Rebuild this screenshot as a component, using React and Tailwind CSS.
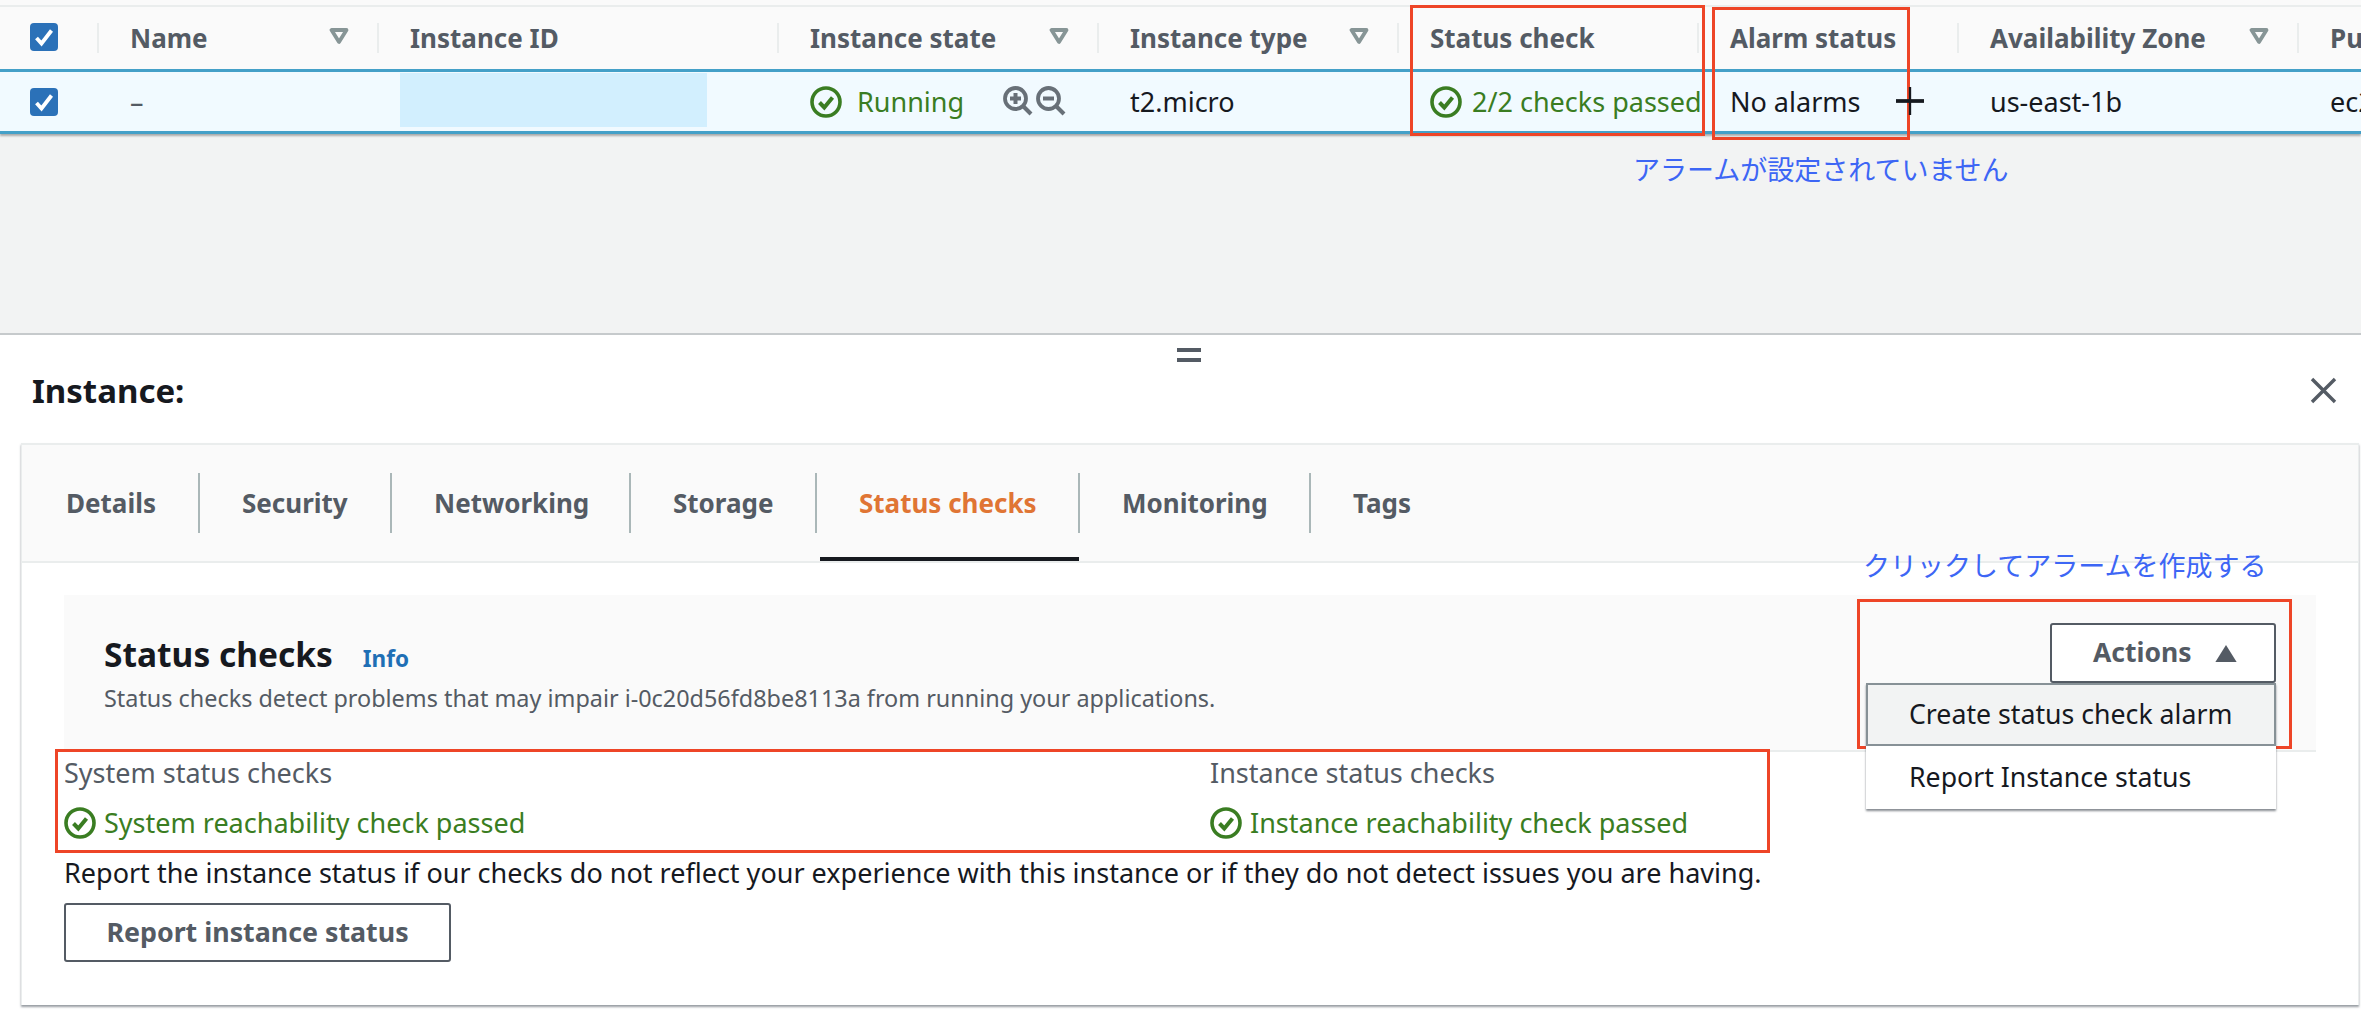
const Check = ({ className }) => (
  <svg viewBox="0 0 32 32" className={`${className} shrink-0`} fill="none">
    <circle cx="16" cy="16" r="14" stroke="#3a7d22" strokeWidth="3.6" />
    <path d="M9.5 16.5l4.8 5L22.5 11.5" stroke="#3a7d22" strokeWidth="4" />
  </svg>
);

const Box = () => (
  <div className="w-[28px] h-[28px] rounded-[4px] bg-[#2b71b8] flex items-center justify-center">
    <svg viewBox="0 0 28 28" className="w-[28px] h-[28px]" fill="none">
      <path d="M6.5 15l5 5.5L21.5 7.5" stroke="#fff" strokeWidth="3.8" />
    </svg>
  </div>
);

const Filter = () => (
  <svg viewBox="0 0 20 16" className="w-[20px] h-[16px]" fill="none">
    <path d="M2.5 2h15L10 14z" stroke="#879596" strokeWidth="3.8" strokeLinejoin="round" />
  </svg>
);

const Zoom = ({ plus }) => (
  <svg viewBox="0 0 30 30" className="w-[30px] h-[30px]" fill="none">
    <circle cx="12.5" cy="12.5" r="10.5" stroke="#687078" strokeWidth="3.8" />
    <path d="M20 20l8 8" stroke="#687078" strokeWidth="4" />
    <path d="M7 12.5h11" stroke="#687078" strokeWidth="4" />
    {plus && <path d="M12.5 7v11" stroke="#687078" strokeWidth="4" />}
  </svg>
);

const HeadCell = ({ w, label, filter }) => (
  <div className={`${w} h-full shrink-0 flex items-center pl-[33px] relative`}>
    <div className="absolute left-0 top-[16px] w-[2px] h-[30px] bg-[#eaeded]" />
    <span className="font-bold text-[26px] text-[#545b64] whitespace-nowrap">{label}</span>
    {filter && (
      <span className="absolute right-[28px] top-[21px]">
        <Filter />
      </span>
    )}
  </div>
);

const Red = ({ className }) => (
  <div className={`absolute border-[3px] border-[#ee4527] pointer-events-none ${className}`} />
);

const tabs = ["Details", "Security", "Networking", "Storage", "Status checks", "Monitoring", "Tags"];
const tabWidths = ["w-[178px]", "w-[192px]", "w-[239px]", "w-[186px]", "w-[263px]", "w-[231px]", "w-[150px]"];

export default function App() {
  return (
    <div className="relative w-[2361px] h-[1014px] overflow-hidden bg-white flex flex-col font-['Noto_Sans','Noto_Sans_CJK_JP',sans-serif] text-[27px] text-[#16191f]">
      <div className="h-[335px] shrink-0 bg-[#f2f3f3] border-b-2 border-[#c6cacc] flex flex-col">
        <div className="h-[5px] bg-[#fafafa] shrink-0" />
        <div className="h-[64px] shrink-0 flex bg-[#fafafa] border-t-2 border-[#eaeded]">
          <div className="w-[97px] h-full shrink-0 pl-[30px] pt-[16px]">
            <Box />
          </div>
          <HeadCell w="w-[280px]" label="Name" filter />
          <HeadCell w="w-[400px]" label="Instance ID" />
          <HeadCell w="w-[320px]" label="Instance state" filter />
          <HeadCell w="w-[300px]" label="Instance type" filter />
          <HeadCell w="w-[300px]" label="Status check" />
          <HeadCell w="w-[260px]" label="Alarm status" />
          <HeadCell w="w-[340px]" label="Availability Zone" filter />
          <HeadCell w="w-[64px]" label="Pu" />
        </div>
        <div className="h-[65px] shrink-0 flex items-center bg-[#f1faff] border-y-[3px] border-[#44a0c8] shadow-[0_2px_2px_rgba(0,0,0,0.3)] leading-[36px]">
          <div className="w-[97px] shrink-0 pl-[30px]">
            <Box />
          </div>
          <div className="w-[280px] shrink-0 pl-[33px] text-[#545b64]">–</div>
          <div className="w-[400px] shrink-0 pl-[23px]">
            <div className="w-[307px] h-[54px] -mt-[3px] bg-[#d2effe]" />
          </div>
          <div className="w-[320px] shrink-0 pl-[33px] flex items-center">
            <Check className="w-[32px] h-[32px]" />
            <span className="ml-[15px] text-[#3a7d22] w-[146px]">Running</span>
            <span className="-mt-[1px]">
              <Zoom plus />
            </span>
            <span className="ml-[3px] -mt-[1px]">
              <Zoom />
            </span>
          </div>
          <div className="w-[300px] shrink-0 pl-[33px]">t2.micro</div>
          <div className="w-[300px] shrink-0 pl-[33px] flex items-center">
            <Check className="w-[32px] h-[32px]" />
            <span className="ml-[10px] text-[#3a7d22] whitespace-nowrap">2/2 checks passed</span>
          </div>
          <div className="w-[260px] shrink-0 pl-[33px]">No alarms</div>
          <div className="w-[340px] shrink-0 pl-[33px]">us-east-1b</div>
          <div className="w-[64px] shrink-0 pl-[33px] overflow-hidden">ec2</div>
        </div>
      </div>

      <div className="flex-1 flex flex-col pb-[9px]">
        <div className="h-[108px] shrink-0 flex items-start justify-between pl-[32px] pr-[24px] pt-[37px]">
          <h2 className="font-bold text-[33px] leading-[38px]">Instance:</h2>
          <svg viewBox="0 0 27 27" className="w-[27px] h-[27px] mt-[5px]" fill="none">
            <path d="M2 2l23 23M25 2L2 25" stroke="#545b64" strokeWidth="3.4" />
          </svg>
        </div>

        <div className="flex-1 ml-[21px] mr-[2px] bg-white border-t-2 border-x border-[#eaeded] shadow-[0_2px_2px_rgba(84,91,100,0.6)] flex flex-col">
          <div className="h-[118px] shrink-0 bg-[#fafafa] border-b-2 border-[#eaeded] flex items-center relative">
            {tabs.map((t, i) => (
              <div
                key={t}
                className={`${tabWidths[i]} h-[60px] shrink-0 flex items-center font-bold text-[26px] ${i === 0 ? "pl-[44px]" : "pl-[42px]"} ${i === 4 ? "text-[#e07534]" : "text-[#545b64]"} ${i < 6 ? "border-r-2 border-[#aab7b8]" : ""}`}
              >
                {t}
              </div>
            ))}
            <div className="absolute left-[798px] bottom-0 w-[259px] h-[4px] bg-[#16191f]" />
          </div>

          <div className="px-[42px] pt-[32px]">
            <div className="h-[157px] bg-[#fafafa] border-b-2 border-[#eaeded] flex items-start pl-[40px] pr-[40px]">
              <div className="pt-[37px]">
                <div className="flex items-baseline">
                  <h3 className="font-bold text-[33.5px] leading-[44px]">Status checks</h3>
                  <a className="ml-[30px] font-bold text-[22.5px] text-[#1f6fb5]">Info</a>
                </div>
                <p className="text-[23.4px] leading-[30px] mt-[7px] text-[#545b64] whitespace-nowrap">
                  Status checks detect problems that may impair i-0c20d56fd8be8113a from running your applications.
                </p>
              </div>
              <div className="ml-auto relative mt-[28px]">
                <button className="w-[226px] h-[60px] bg-white border-2 border-[#545b64] rounded-[3px] font-bold text-[26.5px] text-[#545b64] flex items-center pl-[41px]">
                  Actions
                  <svg viewBox="0 0 20 16" className="w-[22px] h-[17px] ml-[23px]">
                    <path d="M10 0l10 16H0z" fill="#545b64" />
                  </svg>
                </button>
                <div className="absolute z-10 top-full right-0 w-[410px] bg-white shadow-[0_2px_2px_rgba(84,91,100,0.7)]">
                  <div className="h-[63px] bg-[#f2f3f3] border-2 border-[#879196] flex items-center pl-[41px] text-[26.7px]">
                    Create status check alarm
                  </div>
                  <div className="h-[63px] flex items-center pl-[43px] text-[26.7px]">Report Instance status</div>
                </div>
              </div>
            </div>

            <div className="flex mt-[3px]">
              <div className="w-[1146px] shrink-0">
                <div className="h-[36px] flex items-center text-[#545b64]">System status checks</div>
                <div className="mt-[16px] h-[32px] flex items-center text-[#3a7d22]">
                  <Check className="w-[32px] h-[32px] mr-[8px]" />
                  System reachability check passed
                </div>
              </div>
              <div>
                <div className="h-[36px] flex items-center text-[#545b64]">Instance status checks</div>
                <div className="mt-[16px] h-[32px] flex items-center text-[#3a7d22]">
                  <Check className="w-[32px] h-[32px] mr-[8px]" />
                  Instance reachability check passed
                </div>
              </div>
            </div>
            <p className="mt-[16px] h-[36px] leading-[36px] whitespace-nowrap">
              Report the instance status if our checks do not reflect your experience with this instance or if they do not detect issues you are having.
            </p>
            <button className="mt-[12px] w-[387px] h-[59px] bg-white border-2 border-[#545b64] rounded-[3px] font-bold text-[26.8px] text-[#545b64]">
              Report instance status
            </button>
          </div>
        </div>
      </div>

      <div className="absolute left-[1177px] top-[348px] w-[24px] h-[14px] border-y-4 border-[#545b64]" />
      <Red className="left-[1410px] top-[5px] w-[295px] h-[131px]" />
      <Red className="left-[1712px] top-[7px] w-[198px] h-[133px]" />
      <Red className="left-[1857px] top-[599px] w-[435px] h-[150px]" />
      <Red className="left-[55px] top-[749px] w-[1715px] h-[104px]" />
      <span className="absolute left-[1633px] top-[152px] text-[#3d66f5] text-[27px] leading-[36px] whitespace-nowrap">アラームが設定されていません</span>
      <span className="absolute left-[1863px] top-[548px] text-[#3d66f5] text-[27px] leading-[36px] whitespace-nowrap">クリックしてアラームを作成する</span>
      <svg viewBox="0 0 30 30" className="absolute left-[1895px] top-[87px] w-[30px] h-[28px]" fill="none">
        <path d="M0 15h30" stroke="#16191f" strokeWidth="4" />
        <path d="M15 0v30" stroke="#16191f" strokeWidth="2.5" />
      </svg>
    </div>
  );
}
